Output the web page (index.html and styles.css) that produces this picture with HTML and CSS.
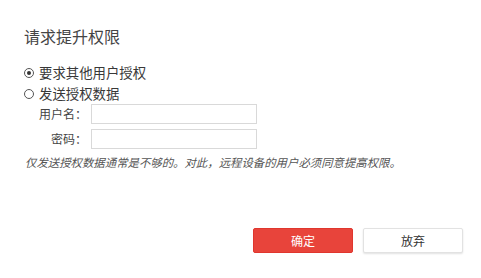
FILE: index.html
```html
<!DOCTYPE html>
<html lang="zh-CN">
<head>
<meta charset="utf-8">
<title>请求提升权限</title>
<link rel="stylesheet" href="styles.css">
</head>
<body>
<div class="dialog">
  <h1 class="title">请求提升权限</h1>
  <div class="options">
    <div class="option"><span class="radio checked"></span><span>要求其他用户授权</span></div>
    <div class="option"><span class="radio"></span><span>发送授权数据</span></div>
  </div>
  <div class="fields">
    <label class="label">用户名：</label>
    <div class="input"></div>
    <label class="label">密码：</label>
    <div class="input"></div>
  </div>
  <p class="note">仅发送授权数据通常是不够的。对此，远程设备的用户必须同意提高权限。</p>
  <div class="actions">
    <button class="btn primary">确定</button>
    <button class="btn secondary">放弃</button>
  </div>
</div>
</body>
</html>
```
FILE: styles.css
```css
html, body {
  margin: 0;
  padding: 0;
  background: #ffffff;
}
.dialog {
  width: 481px;
  height: 278px;
  box-sizing: border-box;
  padding: 26px 18px 0 24px;
  display: flex;
  flex-direction: column;
  font-family: "Noto Sans CJK SC", "Noto Sans", sans-serif;
  color: #333333;
}
.title {
  margin: 0;
  font-size: 16px;
  line-height: 20px;
  font-weight: normal;
  color: #444444;
}
.options {
  margin-top: 16px;
  display: flex;
  flex-direction: column;
}
.option {
  display: flex;
  align-items: center;
  gap: 5px;
  height: 21px;
  font-size: 13.4px;
  line-height: 21px;
  color: #383838;
}
.radio {
  width: 10px;
  height: 10px;
  box-sizing: border-box;
  border: 1px solid #555;
  border-radius: 50%;
  display: flex;
  align-items: center;
  justify-content: center;
}
.radio.checked::after {
  content: "";
  width: 4px;
  height: 4px;
  border-radius: 50%;
  background: #333;
}
.fields {
  display: grid;
  grid-template-columns: 63px 166px;
  column-gap: 4px;
  row-gap: 5px;
  align-items: center;
}
.label {
  text-align: right;
  font-size: 12px;
  line-height: 20px;
  color: #444;
}
.input {
  height: 20px;
  box-sizing: border-box;
  border: 1px solid #d9d9d9;
  background: #fff;
}
.note {
  margin: 6px 0 0 1px;
  font-size: 11.4px;
  line-height: 14px;
  font-style: italic;
  color: #555;
}
.actions {
  margin-top: 59px;
  display: flex;
  justify-content: flex-end;
  gap: 10px;
}
.btn {
  width: 100px;
  height: 25px;
  font-family: "Noto Sans CJK SC", "Noto Sans", sans-serif;
  font-size: 12px;
  border-radius: 2px;
  padding: 0;
}
.primary {
  background: #e8443b;
  border: 1px solid #e0362e;
  color: #fff;
}
.secondary {
  background: #fff;
  border: 1px solid #e2e2e2;
  color: #333;
  box-shadow: 0 1px 2px rgba(0,0,0,0.12);
}
```
